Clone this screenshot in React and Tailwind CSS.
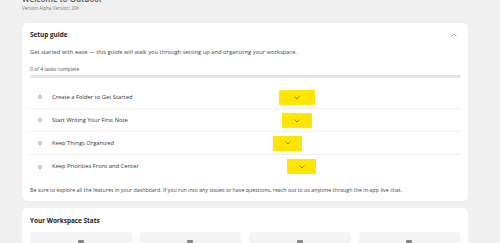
import React from "react";

const tasks = [
  { label: "Create a Folder to Get Started", btn: "ml-[117px] w-[36px] h-[15px] -rotate-[1deg]" },
  { label: "Start Writing Your First Note", btn: "ml-[120px] w-[30px] h-[15px] rotate-[1deg]" },
  { label: "Keep Things Organized", btn: "ml-[111px] w-[29px] h-[15px]" },
  { label: "Keep Priorities Front and Center", btn: "ml-[125px] w-[29px] h-[15px]" },
];

function Chevron({ up }) {
  return (
    <svg width="6" height="4" viewBox="0 0 6 4" fill="none">
      <path
        d={up ? "M0.8 3.2 L3 1 L5.2 3.2" : "M0.8 0.8 L3 3 L5.2 0.8"}
        stroke="currentColor"
        strokeWidth="0.9"
        strokeLinecap="round"
        strokeLinejoin="round"
      />
    </svg>
  );
}

export default function App() {
  return (
    <div className="min-h-screen bg-[#f0f0f0] pl-[22px] font-['Open_Sans',sans-serif] overflow-hidden">
      <div className="w-[446px]">
        <div className="-mt-[6px] h-[10px] text-[8px] font-semibold leading-[10px] text-[#555]">
          Welcome to Outdoor
        </div>
        <div className="h-[9px] text-[4.6px] leading-[9px] text-[#777]">Version Alpha Version: 296</div>

        <div className="mt-[10px] rounded-[5px] bg-white shadow-[0_0_1px_rgba(0,0,0,0.08)] px-[8px]">
          <div className="flex h-[23px] items-center justify-between pt-[1px]">
            <span className="text-[6.4px] font-bold text-[#222]">Setup guide</span>
            <span className="mr-[3px] text-[#999]">
              <Chevron up />
            </span>
          </div>
          <p className="mt-[2px] text-[5.8px] leading-[8px] text-[#444]">
            Get started with ease — this guide will walk you through setting up and organizing your workspace.
          </p>
          <p className="mt-[9px] text-[5px] leading-[8px] text-[#555]">0 of 4 tasks complete</p>
          <div className="mt-[2px] h-[3px] w-[431px] rounded-full bg-[#e4e4e4]" />
          <div className="mt-[8px] w-[431px]">
            {tasks.map((t, i) => (
              <div
                key={t.label}
                className={`flex h-[23px] items-center ${i < tasks.length - 1 ? "border-b border-[#efefef]" : ""}`}
              >
                <span className="ml-[8px] h-[4px] w-[4px] rounded-full border-[0.8px] border-[#aaa]" />
                <span className="ml-[10px] w-[110px] text-[5.8px] font-medium text-[#333]">{t.label}</span>
                <span className={`flex items-center justify-center bg-[#ffe500] text-[#8c7b00] ${t.btn}`}>
                  <Chevron />
                </span>
              </div>
            ))}
          </div>
          <p className="mt-[8px] pb-[7px] text-[5.3px] leading-[8px] text-[#444]">
            Be sure to explore all the features in your dashboard. If you run into any issues or have questions, reach
            out to us anytime through the in-app live chat.
          </p>
        </div>

        <div className="mt-[7px] rounded-[5px] bg-white px-[8px] pb-[10px]">
          <div className="flex h-[24px] items-center pt-[1px]">
            <span className="text-[6.4px] font-bold text-[#222]">Your Workspace Stats</span>
          </div>
          <div className="grid grid-cols-4 gap-[8px]">
            {["user", "doc", "folder", "check"].map((k) => (
              <div key={k} className="flex h-[40px] justify-center rounded-[4px] bg-[#f4f4f4] pt-[8px]">
                <span className="h-[3px] w-[6px] rounded-t-[1px] bg-[#888]" />
              </div>
            ))}
          </div>
        </div>
      </div>
    </div>
  );
}
